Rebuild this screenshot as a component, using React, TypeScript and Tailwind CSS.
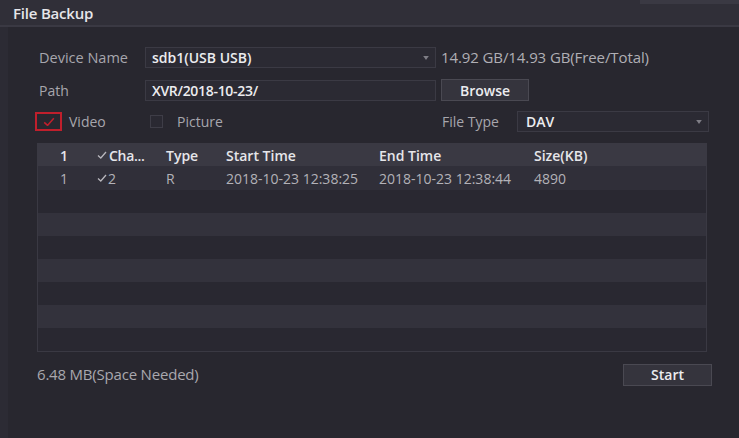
import React from "react";

const Arrow = () => (
  <svg width="6" height="4" viewBox="0 0 7 5" className="shrink-0">
    <path d="M0 0 L7 0 L3.5 5 Z" fill="#7f7e86" />
  </svg>
);

const Check = ({ color = "#b8b7bd", w = 10 }: { color?: string; w?: number }) => (
  <svg width={w} height={w * 0.8} viewBox="0 0 10 8">
    <path d="M1 4.5 L3.8 7 L9 1" stroke={color} strokeWidth="1.3" fill="none" />
  </svg>
);

export default function App() {
  const rows = [0, 1, 2, 3, 4, 5, 6, 7];
  return (
    <div
      className="w-[739px] h-[438px] bg-[#28272f] flex flex-col overflow-hidden text-[14px] text-[#a7a6ad]"
      style={{ fontFamily: '"Open Sans", "Noto Sans", sans-serif' }}
    >
      {/* Title bar */}
      <div className="h-[27px] shrink-0 bg-[#302f38] border-b-2 border-[#3a3943] flex items-start">
        <div className="pl-[13px] pt-[2px] text-[15px] font-semibold text-[#e6e6ea] tracking-[-0.2px]">
          File Backup
        </div>
        <div className="ml-auto w-[99px] h-[4px] bg-[#3a3943]" />
      </div>

      <div className="flex flex-1">
        <div className="w-[8px] bg-[#2c2b34] shrink-0" />
        <div className="flex-1 flex flex-col pl-[30px] pr-[30px]">
          {/* Device Name */}
          <div className="flex items-center mt-[20px] h-[21px]">
            <div className="w-[107px] pl-[1px] text-[14.5px]">Device Name</div>
            <div className="w-[291px] h-[21px] bg-[#2b2a33] border border-[#3b3a44] flex items-center pl-[6px] pr-[6px]">
              <span className="text-[#ececef] font-semibold">sdb1(USB USB)</span>
              <span className="ml-auto"><Arrow /></span>
            </div>
            <div className="ml-[5px] text-[#b0afb5] text-[15px] tracking-[-0.1px]">14.92 GB/14.93 GB(Free/Total)</div>
          </div>

          {/* Path */}
          <div className="flex items-center mt-[11px] h-[22px]">
            <div className="w-[107px] pl-[1px]">Path</div>
            <div className="w-[291px] h-[21px] bg-[#2b2a33] border border-[#3b3a44] flex items-center pl-[6px]">
              <span className="text-[#ececef] font-semibold tracking-[-0.3px]">XVR/2018-10-23/</span>
            </div>
            <div className="ml-[5px] w-[88px] h-[22px] bg-[#35343d] border border-[#4a4952] flex items-center justify-center text-[#ececef] font-semibold">
              Browse
            </div>
          </div>

          {/* Video / Picture / File Type */}
          <div className="flex items-center mt-[10px] h-[21px]">
            <div className="w-[27px] h-[19px] -ml-[3px] border-2 border-[#c01f2c] flex items-center justify-center">
              <Check color="#c01f2c" w={12} />
            </div>
            <div className="ml-[7px] w-[81px]">Video</div>
            <div className="w-[13px] h-[13px] border border-[#3e3d47] bg-[#2a2932]" />
            <div className="ml-[14px]">Picture</div>
            <div className="ml-auto w-[75px]">File Type</div>
            <div className="w-[192px] h-[21px] bg-[#2b2a33] border border-[#3b3a44] flex items-center pl-[8px] pr-[6px]">
              <span className="text-[#ececef] font-semibold">DAV</span>
              <span className="ml-auto"><Arrow /></span>
            </div>
          </div>

          {/* Table */}
          <div className="mt-[11px] w-[670px] -ml-[1px] border border-[#3a3943] flex flex-col">
            <div className="h-[22px] bg-[#3a3943] flex items-center text-[#e6e6ea] font-semibold">
              <div className="w-[56px] pl-[22px]">1</div>
              <div className="w-[72px] flex items-center gap-[2px] pl-[3px]">
                <Check />
                <span className="tracking-[-0.3px]">Cha...</span>
              </div>
              <div className="w-[60px]">Type</div>
              <div className="w-[153px]">Start Time</div>
              <div className="w-[155px]">End Time</div>
              <div>Size(KB)</div>
            </div>
            <div className="h-[24px] bg-[#302f39] flex items-center text-[#b3b2b8]">
              <div className="w-[56px] pl-[22px]">1</div>
              <div className="w-[72px] flex items-center gap-[1px] pl-[3px]">
                <Check />
                <span>2</span>
              </div>
              <div className="w-[60px]">R</div>
              <div className="w-[153px]">2018-10-23 12:38:25</div>
              <div className="w-[155px]">2018-10-23 12:38:44</div>
              <div>4890</div>
            </div>
            {rows.slice(1).map((i) => (
              <div
                key={i}
                className={i % 2 === 1 ? "h-[23px] bg-[#292831]" : "h-[23px] bg-[#33323c]"}
              />
            ))}
          </div>

          {/* Bottom */}
          <div className="flex items-center mt-[11px] h-[23px]">
            <div className="-ml-[1px] text-[15px] text-[#a9a8ae] tracking-[-0.2px]">6.48 MB(Space Needed)</div>
            <div className="ml-auto mr-[-3px] w-[89px] h-[22px] bg-[#35343d] border border-[#4a4952] flex items-center justify-center text-[#ececef] font-semibold">
              Start
            </div>
          </div>
        </div>
      </div>
    </div>
  );
}
